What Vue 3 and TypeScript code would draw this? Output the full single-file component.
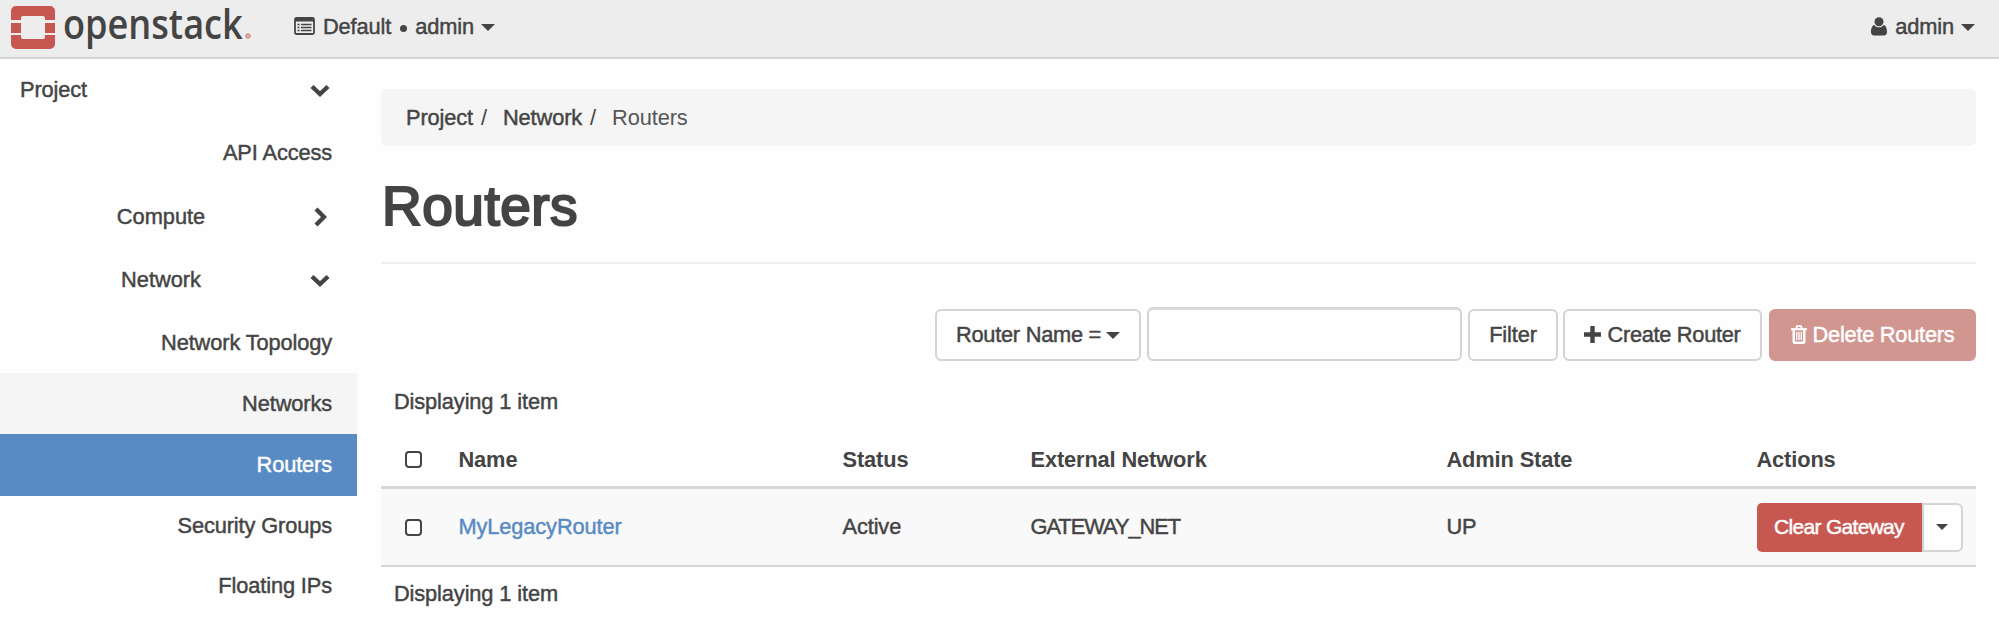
<script setup lang="ts">
import { ref } from 'vue'

interface NavItem {
  label: string
  kind: 'panel' | 'group' | 'root'
  icon?: 'down' | 'right'
  state?: 'hover' | 'active'
  size: 's60' | 's61' | 's62' | 's63' | 's64'
}

interface RouterRow {
  name: string
  status: string
  network: string
  adminState: string
}

const nav: NavItem[] = [
  { label: 'Project', kind: 'root', icon: 'down', size: 's62' },
  { label: 'API Access', kind: 'panel', size: 's64' },
  { label: 'Compute', kind: 'group', icon: 'right', size: 's63' },
  { label: 'Network', kind: 'group', icon: 'down', size: 's64' },
  { label: 'Network Topology', kind: 'panel', size: 's61' },
  { label: 'Networks', kind: 'panel', state: 'hover', size: 's61' },
  { label: 'Routers', kind: 'panel', state: 'active', size: 's62' },
  { label: 'Security Groups', kind: 'panel', size: 's60' },
  { label: 'Floating IPs', kind: 'panel', size: 's60' },
]

const routers: RouterRow[] = [
  { name: 'MyLegacyRouter', status: 'Active', network: 'GATEWAY_NET', adminState: 'UP' },
]

const filterText = ref('')
</script>

<template>
  <div class="page">
    <header class="topbar">
      <svg class="logo" width="44" height="57" viewBox="0 0 44 57">
        <g fill="#c75851">
          <path d="M5 6H39a5 5 0 0 1 5 5V20H34V18a2 2 0 0 0-2-2H12a2 2 0 0 0-2 2V20H0V11a5 5 0 0 1 5-5z" />
          <rect x="0" y="23" width="10" height="10" />
          <rect x="34" y="23" width="10" height="10" />
          <path d="M0 35H10V37a2 2 0 0 0 2 2H32a2 2 0 0 0 2-2V35H44V44a5 5 0 0 1-5 5H5a5 5 0 0 1-5-5z" />
        </g>
      </svg>
      <span class="wordmark">openstack</span>
      <svg class="mark" width="6" height="57" viewBox="0 0 6 57">
        <circle cx="3" cy="36" r="2.200" fill="#d9aaa6" stroke="#d8948e" stroke-width="1.200" />
      </svg>
      <div class="context">
        <svg width="21" height="18" viewBox="0 0 21 18">
          <rect x="1" y="1" width="19" height="16" rx="1.500" fill="none" stroke="#444" stroke-width="1.800" />
          <path d="M1 1H20V4.500H1z" fill="#444" />
          <path d="M3.500 7.500h2M3.500 10.500h2M3.500 13.500h2M7 7.500h10.500M7 10.500h10.500M7 13.500h10.500" stroke="#444" stroke-width="1.500" />
        </svg>
        <span class="domain">Default</span>
        <i class="dot"></i>
        <span>admin</span>
        <i class="caret"></i>
      </div>
      <div class="user">
        <svg width="16" height="19" viewBox="0 0 16 19">
          <circle cx="8" cy="4.700" r="4.500" fill="#444" />
          <path d="M3.300 8C1 8.500 0 11.500 0 15c0 2.300 1.300 3.500 3 3.500H13c1.700 0 3-1.200 3-3.500 0-3.500-1-6.500-3.300-7-1.200 1.400-2.700 2.300-4.700 2.300S4.500 9.400 3.300 8z" fill="#444" />
        </svg>
        <span>admin</span>
        <i class="caret"></i>
      </div>
    </header>

    <div class="body">
      <nav class="sidebar">
        <div v-for="item in nav" :key="item.label" class="item" :class="[item.kind, item.state, item.size]">
          <span class="label">{{ item.label }}</span>
          <svg v-if="item.icon === 'down'" class="chevron" width="20" height="13" viewBox="0 0 20 13">
            <path d="M2 2.500 10 10 18 2.500" fill="none" stroke="#444" stroke-width="4.400" />
          </svg>
          <svg v-else-if="item.icon === 'right'" class="chevron side" width="13" height="20" viewBox="0 0 13 20">
            <path d="M2 2 10 10 2 18" fill="none" stroke="#444" stroke-width="4.400" />
          </svg>
        </div>
      </nav>

      <main class="content">
        <div class="breadcrumb">
          <span>Project</span><i class="sep">/</i>
          <span>Network</span><i class="sep">/</i>
          <span class="current">Routers</span>
        </div>
        <h1>Routers</h1>

        <div class="toolbar">
          <button class="btn select"><span>Router Name =</span><i class="caret"></i></button>
          <input v-model="filterText" class="search" type="text" />
          <button class="btn filter">Filter</button>
          <button class="btn create">
            <svg width="17" height="17" viewBox="0 0 17 17"><path d="M6.300 0H10.700V6.300H17V10.700H10.700V17H6.300V10.700H0V6.300H6.300z" fill="#444" /></svg>
            <span>Create Router</span>
          </button>
          <button class="btn delete">
            <svg width="16" height="19" viewBox="0 0 16 19" fill="none" stroke="#fff">
              <path d="M0 4.200H16" stroke-width="2.200" />
              <path d="M5 4 6 1.200H10L11 4" stroke-width="1.800" />
              <path d="M2.700 5V16.500Q2.700 17.800 4 17.800H12Q13.300 17.800 13.300 16.500V5" stroke-width="2.400" />
              <path d="M5.700 7V15M8 7V15M10.300 7V15" stroke-width="1.400" />
            </svg>
            <span>Delete Routers</span>
          </button>
        </div>

        <div class="count top">Displaying 1 item</div>
        <div class="row head">
          <i class="check"></i>
          <span>Name</span><span>Status</span><span class="ext">External Network</span><span>Admin State</span><span>Actions</span>
        </div>
        <div v-for="r in routers" :key="r.name" class="row data">
          <i class="check"></i>
          <a class="link">{{ r.name }}</a>
          <span>{{ r.status }}</span>
          <span class="gateway">{{ r.network }}</span>
          <span>{{ r.adminState }}</span>
          <div class="actions">
            <button class="clear">Clear Gateway</button>
            <button class="more"><i class="caret"></i></button>
          </div>
        </div>
        <div class="count bottom">Displaying 1 item</div>
      </main>
    </div>
  </div>
</template>

<style>
body {
  background: #fefefe;
}
</style>

<style scoped>
.page {
  width: 1999px;
  height: 631px;
  overflow: hidden;
  color: #444;
  background: #fefefe;
  font: 21.8px/26px "Liberation Sans", Arial, sans-serif;
  letter-spacing: -0.12px;
  -webkit-text-stroke: 0.45px currentColor;
}
.page * {
  box-sizing: border-box;
}
svg {
  flex: none;
  display: block;
}
button {
  font: inherit;
  color: inherit;
  letter-spacing: inherit;
  padding: 0;
  -webkit-text-stroke: inherit;
}
.topbar {
  display: flex;
  height: 59px;
  background: #ededed;
  border-bottom: 2px solid #d4d4d4;
  padding: 0 24px 0 11px;
}
.wordmark {
  width: 181px;
  margin-left: 8px;
  font: 600 42px/45px "Open Sans", sans-serif;
  letter-spacing: 0;
  white-space: nowrap;
  transform: scaleX(0.86);
  transform-origin: 0 0;
  -webkit-text-stroke: 0;
}
.mark {
  margin-left: 1px;
}
.context,
.user {
  display: flex;
  align-items: center;
  height: 54px;
}
.context {
  margin-left: 43px;
}
.context svg {
  margin-top: -2px;
}
.user svg {
  margin-top: -1px;
}
.domain {
  margin-left: 8px;
}
.dot {
  width: 7px;
  height: 7px;
  border-radius: 50%;
  background: #444;
  margin: 2px 8px 0 9px;
}
.caret {
  flex: none;
  border: 7px solid transparent;
  border-top: 7px solid #444;
  border-bottom: 0;
}
.context .caret,
.user .caret {
  margin-left: 7px;
}
.user {
  margin-left: auto;
}
.user span {
  margin-left: 8px;
}
.body {
  display: flex;
}
.sidebar {
  width: 357px;
  flex: none;
}
.item {
  display: flex;
  align-items: center;
  justify-content: flex-end;
  padding-right: 25px;
}
.root {
  justify-content: space-between;
  padding-left: 20px;
}
.group .label {
  width: 168px;
  margin-right: auto;
  margin-left: 77px;
  text-align: center;
  letter-spacing: 0;
}
.chevron {
  margin: 1px 2px 0 0;
}
.chevron.side {
  margin-right: 5px;
}
.s60 { height: 60px; }
.s61 { height: 61px; }
.s62 { height: 62px; }
.s63 { height: 63px; }
.s64 { height: 64px; }
.hover {
  background: #f5f5f5;
}
.active {
  background: #588bc3;
  color: #fff;
}
.content {
  width: 1595px;
  margin-left: 24px;
  padding-top: 30px;
}
.breadcrumb {
  display: flex;
  align-items: center;
  height: 57px;
  padding-left: 25px;
  border-radius: 6px;
  background: #f5f5f5;
}
.sep {
  font-style: normal;
  width: 30px;
  padding-left: 8px;
  -webkit-text-stroke: 0;
}
.current {
  color: #555;
  -webkit-text-stroke: 0;
}
h1 {
  height: 118px;
  margin: 0;
  padding: 29px 0 0 1px;
  border-bottom: 2px solid #eee;
  font-weight: 400;
  font-size: 55px;
  line-height: 62px;
  letter-spacing: 0.5px;
  -webkit-text-stroke: 2.2px #444;
}
.toolbar {
  display: flex;
  justify-content: flex-end;
  align-items: flex-end;
  height: 97px;
}
.btn {
  display: flex;
  align-items: center;
  justify-content: center;
  height: 52px;
  border: 2px solid #d4d4d4;
  border-radius: 6px;
  background: #fefefe;
}
.select {
  width: 206px;
  gap: 5px;
}
.select span {
  letter-spacing: -0.25px;
}
.search {
  width: 315px;
  height: 54px;
  margin: 0 6px 0 6px;
  border: 2px solid #d4d4d4;
  border-radius: 6px;
  background: #fefefe;
  box-shadow: inset 0 1px 1px #ddd;
  font: inherit;
}
.filter {
  width: 90px;
  margin-right: 5px;
}
.create {
  width: 199px;
  margin-right: 7px;
  gap: 6px;
  letter-spacing: -0.3px;
}
.create svg,
.delete svg {
  margin-top: -2px;
}
.delete {
  width: 207px;
  gap: 6px;
  border-color: #d0968f;
  background: #d0968f;
  color: #fff;
  letter-spacing: -0.25px;
}
.count {
  padding-left: 13px;
}
.count.top {
  height: 72px;
  padding-top: 28px;
}
.count.bottom {
  padding-top: 14px;
}
.row {
  display: grid;
  grid-template-columns: 54px 384px 188px 416px 310px 1fr;
  align-items: center;
  padding-left: 24px;
}
.row > * {
  margin-left: -0.5px;
}
.head {
  height: 56px;
  border-bottom: 3px solid #d6d6d6;
  font-weight: 700;
  -webkit-text-stroke: 0;
}
.data {
  height: 78px;
  border-bottom: 2px solid #d6d6d6;
  background: #f9f9f9;
}
.check {
  width: 17px;
  height: 17px;
  border: 2px solid #444;
  border-radius: 4px;
  background: #fff;
}
.link {
  color: #588bc3;
}
.gateway {
  letter-spacing: -1px;
}
.actions {
  display: flex;
  height: 49px;
}
.clear {
  width: 165px;
  border: 0;
  border-radius: 5px 0 0 5px;
  background: #c75851;
  color: #fff;
  font-size: 21px;
  letter-spacing: -0.7px;
}
.more {
  display: flex;
  align-items: center;
  justify-content: center;
  width: 41px;
  border: 2px solid #d4d4d4;
  border-radius: 0 6px 6px 0;
  background: #fefefe;
}
.more .caret {
  border-width: 6px 6px 0;
}
</style>
